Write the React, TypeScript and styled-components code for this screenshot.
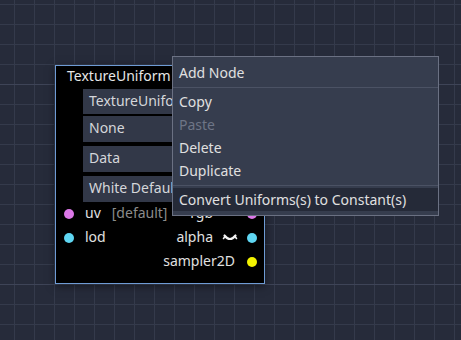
import React from 'react';
import styled, { createGlobalStyle } from 'styled-components';

const GlobalStyle = createGlobalStyle`
  html, body {
    margin: 0;
    padding: 0;
    background: #262b3a;
    overflow: hidden;
  }
  body {
    font-family: 'Noto Sans', 'DejaVu Sans', sans-serif;
    font-size: 14px;
    color: #e0e0e0;
  }
  *, *::before, *::after {
    box-sizing: border-box;
  }
`;

// the graph editor canvas, grid drawn with gradients
const Canvas = styled.div`
  position: relative;
  width: 461px;
  height: 340px;
  overflow: hidden;
  background-color: #262b3a;
  background-image:
    linear-gradient(180deg, #3e4457 1px, transparent 1px),
    linear-gradient(90deg, #343a4b 1px, transparent 1px),
    linear-gradient(180deg, #343a4b 1px, transparent 1px);
  background-size: 200px 200px, 20px 20px, 20px 20px;
  background-position: 0 84px, 14px 0, 0 4px;
`;

const GraphNode = styled.div`
  position: absolute;
  left: 55px;
  top: 65px;
  width: 210px;
  height: 219px;
  border: 1px solid #6e9bd4;
  background: #000;
  box-shadow: 0 2px 8px rgba(0, 0, 0, 0.5);
  display: flex;
  flex-direction: column;
`;

const NodeTitle = styled.div`
  padding-left: 11px;
  line-height: 19px;
  height: 19px;
  color: #e6e6e6;
  white-space: nowrap;
`;

const Controls = styled.div`
  display: flex;
  flex-direction: column;
  padding: 4px 11px 0 27px;
`;

const Field = styled.div<{ $gap: number; $h: number }>`
  height: ${p => p.$h}px;
  margin-bottom: ${p => p.$gap}px;
  background: #323848;
  color: #d4d6da;
  padding: 0 6px 2px;
  line-height: ${p => p.$h - 2}px;
  white-space: nowrap;
  overflow: hidden;
`;

const Ports = styled.div`
  display: flex;
  flex-direction: column;
  padding: 0 7px 0 8px;
`;

const PortRow = styled.div`
  height: 24px;
  display: flex;
  align-items: center;
  line-height: 22px;
  white-space: nowrap;
`;

const Side = styled.div<{ $right?: boolean }>`
  display: flex;
  align-items: center;
  flex: 1;
  justify-content: ${p => (p.$right ? 'flex-end' : 'flex-start')};
`;

const Dot = styled.span<{ $color: string }>`
  width: 10px;
  height: 10px;
  border-radius: 50%;
  background: ${p => p.$color};
  flex: none;
`;

const Label = styled.span<{ $left?: number; $right?: number }>`
  padding-bottom: 2px;
  margin-left: ${p => p.$left ?? 0}px;
  margin-right: ${p => p.$right ?? 0}px;
  color: #e0e0e0;
`;

const DefaultHint = styled.span`
  padding-bottom: 2px;
  margin-left: 11px;
  color: #8c8c8c;
`;

const EyeButton = styled.span`
  width: 24px;
  height: 16px;
  margin-left: 5px;
  margin-right: 5px;
  display: flex;
  align-items: center;
  justify-content: center;
`;

const ClosedEye = () => (
  <svg width="16" height="12" viewBox="0 0 16 12">
    <path d="M2.5 3.5 Q8 10.5 13.5 3.5" fill="none" stroke="#f2f2f2" strokeWidth="2.2" strokeLinecap="round" />
    <path d="M3 4.5 L1.5 6.5 M13 4.5 L14.5 6.5" fill="none" stroke="#f2f2f2" strokeWidth="1.6" strokeLinecap="round" />
  </svg>
);

// right-click popup menu
const Popup = styled.div`
  position: absolute;
  left: 172px;
  top: 56px;
  width: 267px;
  border: 1px solid #6b7183;
  background: #363d4e;
  padding: 4px 0;
  display: flex;
  flex-direction: column;
`;

const MenuItem = styled.div<{ $disabled?: boolean; $hover?: boolean }>`
  height: 23px;
  line-height: 23px;
  padding-left: 6px;
  white-space: nowrap;
  color: ${p => (p.$disabled ? '#6e7586' : '#e0e0e0')};
  background: ${p => (p.$hover ? '#252a38' : 'transparent')};
`;

const Separator = styled.div`
  height: 1px;
  margin: 3px 0 2px;
  background: #4b5264;
`;

export default function App() {
  return (
    <>
      <GlobalStyle />
      <Canvas>
        <GraphNode>
          <NodeTitle>TextureUniform</NodeTitle>
          <Controls>
            <Field $h={25} $gap={2}>TextureUniform</Field>
            <Field $h={26} $gap={4}>None</Field>
            <Field $h={26} $gap={4}>Data</Field>
            <Field $h={26} $gap={0}>White Default</Field>
          </Controls>
          <Ports>
            <PortRow>
              <Side>
                <Dot $color="#dc78e8" />
                <Label $left={11}>uv</Label>
                <DefaultHint>[default]</DefaultHint>
              </Side>
              <Side $right>
                <Label>rgb</Label>
                <EyeButton><ClosedEye /></EyeButton>
                <Dot $color="#dc78e8" />
              </Side>
            </PortRow>
            <PortRow>
              <Side>
                <Dot $color="#5fd6f2" />
                <Label $left={11}>lod</Label>
              </Side>
              <Side $right>
                <Label>alpha</Label>
                <EyeButton><ClosedEye /></EyeButton>
                <Dot $color="#5fd6f2" />
              </Side>
            </PortRow>
            <PortRow>
              <Side $right>
                <Label $right={12}>sampler2D</Label>
                <Dot $color="#f2f200" />
              </Side>
            </PortRow>
          </Ports>
        </GraphNode>
        <Popup>
          <MenuItem>Add Node</MenuItem>
          <Separator />
          <MenuItem>Copy</MenuItem>
          <MenuItem $disabled>Paste</MenuItem>
          <MenuItem>Delete</MenuItem>
          <MenuItem>Duplicate</MenuItem>
          <Separator />
          <MenuItem $hover>Convert Uniforms(s) to Constant(s)</MenuItem>
        </Popup>
      </Canvas>
    </>
  );
}
